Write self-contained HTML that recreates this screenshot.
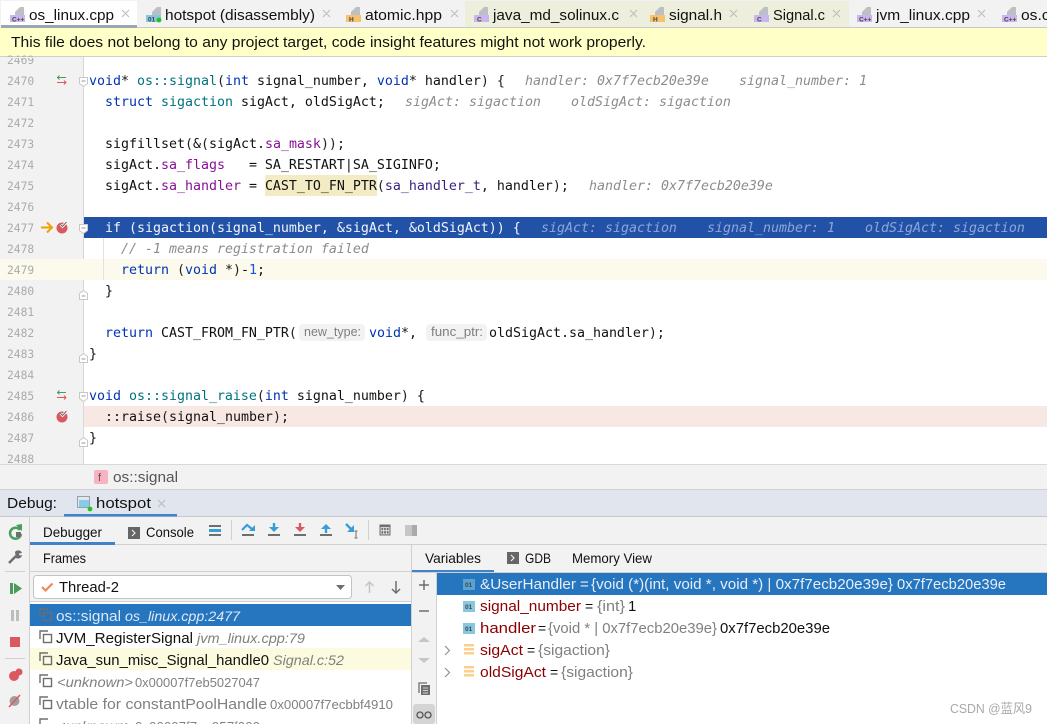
<!DOCTYPE html>
<html><head><meta charset="utf-8"><style>
html,body{margin:0;padding:0;background:#fff;width:1047px;height:724px;overflow:hidden}
svg{display:block}
text{white-space:pre}
.u{font-family:"Liberation Sans","Noto Sans CJK SC",sans-serif;font-size:15px;fill:#111}
.s{font-size:14px}
.c{font-family:"DejaVu Sans Mono",monospace;font-size:13.29px;fill:#111}
.h{font-family:"DejaVu Sans Mono",monospace;font-size:13.29px;font-style:italic;fill:#8c8c8c}
.n{font-family:"DejaVu Sans Mono",monospace;font-size:11.3px;fill:#ababab}
.k{fill:#0033b3}.t{fill:#00727f}.p{fill:#871094}.m{fill:#1750eb}.y{fill:#222}.l{fill:#371f80}
.v{fill:#8b0000}.g{fill:#808080}.w{fill:#e8eef8}
.tiny{font-family:"Liberation Sans",sans-serif;font-size:6.5px;font-weight:bold;fill:#444}
</style></head><body>
<svg width="1047" height="724" viewBox="0 0 1047 724" xmlns="http://www.w3.org/2000/svg">
<!-- tabs -->
<rect x="0" y="0" width="1047" height="28" fill="#f2f2f2"/>
<rect x="465" y="1" width="384" height="26" fill="#eeeedd"/>
<rect x="1" y="1" width="136" height="24" fill="#fff"/>
<rect x="1" y="25" width="136" height="3" fill="#9aa6b4"/>
<rect x="137" y="27" width="910" height="1" fill="#c9c9c9"/>
<g fill="#bcc0c4">
<path d="M15 15v-3l5-5h4v8z"/><path d="M152 15v-3l5-5h4v8z"/><path d="M351 15v-3l5-5h4v8z"/><path d="M479 15v-3l5-5h4v8z"/><path d="M655 15v-3l5-5h4v8z"/><path d="M759 15v-3l5-5h4v8z"/><path d="M862 15v-3l5-5h4v8z"/><path d="M1007 15v-3l5-5h4v8z"/>
</g>
<rect x="10" y="15" width="15" height="7" fill="#c8b6ec"/><text x="12" y="21.500" class="tiny">C++</text>
<rect x="146" y="15" width="15" height="7" fill="#87c8e0"/><text x="148" y="21.500" class="tiny">01</text><circle cx="159" cy="20" r="2.400" fill="#22c322"/>
<rect x="346" y="15" width="15" height="7" fill="#f5c26e"/><text x="349" y="21.500" class="tiny">H</text>
<rect x="474" y="15" width="15" height="7" fill="#c8b6ec"/><text x="477" y="21.500" class="tiny">C</text>
<rect x="650" y="15" width="15" height="7" fill="#f5c26e"/><text x="653" y="21.500" class="tiny">H</text>
<rect x="754" y="15" width="15" height="7" fill="#c8b6ec"/><text x="757" y="21.500" class="tiny">C</text>
<rect x="857" y="15" width="15" height="7" fill="#c8b6ec"/><text x="859" y="21.500" class="tiny">C++</text>
<rect x="1002" y="15" width="15" height="7" fill="#c8b6ec"/><text x="1004" y="21.500" class="tiny">C++</text>
<text x="29" y="20" class="u" textLength="85" lengthAdjust="spacingAndGlyphs">os_linux.cpp</text>
<text x="165" y="20" class="u" textLength="150" lengthAdjust="spacingAndGlyphs">hotspot (disassembly)</text>
<text x="365" y="20" class="u" textLength="77" lengthAdjust="spacingAndGlyphs">atomic.hpp</text>
<text x="493" y="20" class="u" textLength="126" lengthAdjust="spacingAndGlyphs">java_md_solinux.c</text>
<text x="669" y="20" class="u" textLength="53" lengthAdjust="spacingAndGlyphs">signal.h</text>
<text x="773" y="20" class="u" textLength="52" lengthAdjust="spacingAndGlyphs">Signal.c</text>
<text x="876" y="20" class="u" textLength="94" lengthAdjust="spacingAndGlyphs">jvm_linux.cpp</text>
<text x="1021" y="20" class="u" textLength="46" lengthAdjust="spacingAndGlyphs">os.cpp</text>
<g stroke="#bdbdbd" stroke-width="1.100" fill="none">
<path d="M122 10l7 7M129 10l-7 7M323 10l7 7M330 10l-7 7M451 10l7 7M458 10l-7 7M630 10l7 7M637 10l-7 7M730 10l7 7M737 10l-7 7M833 10l7 7M840 10l-7 7M978 10l7 7M985 10l-7 7"/>
</g>
<!-- banner -->
<rect x="0" y="28" width="1047" height="28" fill="#ffffc8"/>
<rect x="0" y="56" width="1047" height="1" fill="#cfcfcf"/>
<text x="11" y="47" class="u" textLength="635" lengthAdjust="spacingAndGlyphs">This file does not belong to any project target, code insight features might not work properly.</text>
<!-- editor -->
<rect x="0" y="57" width="84" height="407" fill="#f2f2f2"/>
<rect x="83" y="57" width="1" height="407" fill="#d8d8d8"/>
<rect x="0" y="259" width="1047" height="21" fill="#fcfaed"/>
<rect x="84" y="217" width="963" height="21" fill="#2251a8"/>
<rect x="84" y="406" width="963" height="21" fill="#f8e8e3"/>
<rect x="265" y="175" width="112" height="21" fill="#f3ebc4"/>
<rect x="103" y="238" width="1" height="42" fill="#e2e2e2"/>
<g class="n">
<text x="7" y="64" class="n">2469</text><text x="7" y="85" class="n">2470</text><text x="7" y="106" class="n">2471</text><text x="7" y="127" class="n">2472</text><text x="7" y="148" class="n">2473</text><text x="7" y="169" class="n">2474</text><text x="7" y="190" class="n">2475</text><text x="7" y="211" class="n">2476</text><text x="7" y="232" class="n">2477</text><text x="7" y="253" class="n">2478</text><text x="7" y="274" class="n">2479</text><text x="7" y="295" class="n">2480</text><text x="7" y="316" class="n">2481</text><text x="7" y="337" class="n">2482</text><text x="7" y="358" class="n">2483</text><text x="7" y="379" class="n">2484</text><text x="7" y="400" class="n">2485</text><text x="7" y="421" class="n">2486</text><text x="7" y="442" class="n">2487</text><text x="7" y="463" class="n">2488</text>
</g>
<rect x="0" y="57" width="83" height="1" fill="#f2f2f2"/>
<text x="89" y="85" class="c"><tspan class="k">void</tspan>* <tspan class="t">os::signal</tspan><tspan class="y">(</tspan><tspan class="k">int</tspan> signal_number, <tspan class="k">void</tspan>* handler<tspan class="y">)</tspan> <tspan class="y">{</tspan></text>
<text x="525" y="85" class="h">handler: 0x7f7ecb20e39e</text><text x="739" y="85" class="h">signal_number: 1</text>
<text x="105" y="106" class="c"><tspan class="k">struct</tspan> <tspan class="t">sigaction</tspan> sigAct, oldSigAct;</text>
<text x="405" y="106" class="h">sigAct: sigaction</text><text x="571" y="106" class="h">oldSigAct: sigaction</text>
<text x="105" y="148" class="c">sigfillset<tspan class="y">(</tspan>&amp;<tspan class="y">(</tspan>sigAct.<tspan class="p">sa_mask</tspan><tspan class="y">))</tspan>;</text>
<text x="105" y="169" class="c">sigAct.<tspan class="p">sa_flags</tspan>   = SA_RESTART|SA_SIGINFO;</text>
<text x="105" y="190" class="c">sigAct.<tspan class="p">sa_handler</tspan> = CAST_TO_FN_PTR<tspan class="y">(</tspan><tspan class="l">sa_handler_t</tspan>, handler<tspan class="y">)</tspan>;</text>
<text x="589" y="190" class="h">handler: 0x7f7ecb20e39e</text>
<text x="105" y="232" class="c" style="fill:#f2f5fb">if (sigaction(signal_number, &amp;sigAct, &amp;oldSigAct)) {</text>
<g style="opacity:.55"><text x="541" y="232" class="h" style="fill:#e6ecf8">sigAct: sigaction</text><text x="707" y="232" class="h" style="fill:#e6ecf8">signal_number: 1</text><text x="865" y="232" class="h" style="fill:#e6ecf8">oldSigAct: sigaction</text></g>
<text x="121" y="253" class="h">// -1 means registration failed</text>
<text x="121" y="274" class="c"><tspan class="k">return</tspan> <tspan class="y">(</tspan><tspan class="k">void</tspan> *<tspan class="y">)</tspan>-<tspan class="m">1</tspan>;</text>
<text x="105" y="295" class="c">}</text>
<text x="105" y="337" class="c"><tspan class="k">return</tspan> CAST_FROM_FN_PTR<tspan class="y">(</tspan></text>
<rect x="299" y="324" width="66" height="17" rx="4" fill="#f2f2f2"/><text x="304" y="336" class="u" style="font-size:12.500px;fill:#7f7f7f" textLength="57" lengthAdjust="spacingAndGlyphs">new_type:</text>
<text x="369" y="337" class="c"><tspan class="k">void</tspan>*,</text>
<rect x="426" y="324" width="61" height="17" rx="4" fill="#f2f2f2"/><text x="431" y="336" class="u" style="font-size:12.500px;fill:#7f7f7f" textLength="52" lengthAdjust="spacingAndGlyphs">func_ptr:</text>
<text x="489" y="337" class="c">oldSigAct.sa_handler<tspan class="y">)</tspan>;</text>
<text x="89" y="358" class="c">}</text>
<text x="89" y="400" class="c"><tspan class="k">void</tspan> <tspan class="t">os::signal_raise</tspan><tspan class="y">(</tspan><tspan class="k">int</tspan> signal_number<tspan class="y">)</tspan> {</text>
<text x="105" y="421" class="c">::raise<tspan class="y">(</tspan>signal_number<tspan class="y">)</tspan>;</text>
<text x="89" y="442" class="c">}</text>
<!-- gutter icons -->
<g fill="none" stroke-width="1">
<path d="M57 77.500h9M59.500 75.500l-2 2 2 2" stroke="#4a9c5d"/><path d="M57 82.500h9M64 80.500l2 2-2 2" stroke="#db5860"/>
<path d="M57 392.500h9M59.500 390.500l-2 2 2 2" stroke="#4a9c5d"/><path d="M57 397.500h9M64 395.500l2 2-2 2" stroke="#db5860"/>
</g>
<path d="M41 227.500h10M47 222.500l5 5-5 5" fill="none" stroke="#eda200" stroke-width="2"/>
<circle cx="62" cy="228" r="5.500" fill="#db5860"/><path d="M60.500 224.500l2 2 4-4.500" stroke="#fff" stroke-width="2.600" fill="none"/><path d="M60.500 224.500l2 2 4-4.500" stroke="#6e6e6e" stroke-width="1.100" fill="none"/>
<circle cx="62" cy="417" r="5.500" fill="#db5860"/><path d="M60.500 413.500l2 2 4-4.500" stroke="#fff" stroke-width="2.600" fill="none"/><path d="M60.500 413.500l2 2 4-4.500" stroke="#6e6e6e" stroke-width="1.100" fill="none"/>
<g fill="#fff" stroke="#c8c8c8" stroke-width="1">
<path d="M79.500 77.500h8v6l-4 3-4-3z"/><path d="M79.500 224.500h8v6l-4 3-4-3z"/><path d="M79.500 392.500h8v6l-4 3-4-3z"/>
<path d="M79.500 293.500l4-3 4 3v6h-8z"/><path d="M79.500 356.500l4-3 4 3v6h-8z"/><path d="M79.500 440.500l4-3 4 3v6h-8z"/>
</g>
<path d="M81.500 81h4M81.500 228h4M81.500 396h4M81.500 296h4M81.500 359h4M81.500 443h4" stroke="#999" stroke-width="1"/>
<!-- breadcrumb -->
<rect x="0" y="464" width="1047" height="25" fill="#f2f2f2"/>
<rect x="0" y="464" width="1047" height="1" fill="#d8d8d8"/>
<rect x="94" y="470" width="14" height="14" rx="2" fill="#f7b3c2"/>
<text x="98" y="481" class="u" style="font-size:11px;fill:#66505a">f</text>
<text x="113" y="482" class="u" style="fill:#555" textLength="65" lengthAdjust="spacingAndGlyphs">os::signal</text>
<!-- debug header -->
<rect x="0" y="489" width="1047" height="28" fill="#e1e5ee"/>
<rect x="0" y="489" width="1047" height="1" fill="#d0d0d0"/>
<rect x="0" y="516" width="1047" height="1" fill="#c9c9c9"/>
<rect x="64" y="514" width="113" height="2.500" fill="#4083c9"/>
<text x="7" y="508" class="u" textLength="50" lengthAdjust="spacingAndGlyphs">Debug:</text>
<rect x="77.500" y="496.500" width="12" height="11" fill="none" stroke="#9aa0a6"/><rect x="79" y="500" width="10" height="7" fill="#86cbe8"/><circle cx="90" cy="509" r="2.400" fill="#22c322"/>
<text x="96" y="508" class="u" textLength="55" lengthAdjust="spacingAndGlyphs">hotspot</text>
<path d="M158 500l7 7M165 500l-7 7" stroke="#bdbdbd" stroke-width="1.100"/>
<!-- debug body -->
<rect x="0" y="517" width="1047" height="207" fill="#f2f2f2"/>
<rect x="29" y="517" width="1" height="207" fill="#d0d0d0"/>
<rect x="30" y="544" width="1017" height="1" fill="#d0d0d0"/>
<rect x="30" y="542" width="85" height="3" fill="#4083c9"/>
<text x="43" y="537" class="u s" textLength="59" lengthAdjust="spacingAndGlyphs">Debugger</text>
<rect x="128" y="527" width="12" height="12" fill="#666"/><path d="M132 530l3 3-3 3" stroke="#eee" fill="none" stroke-width="1.200"/>
<text x="146" y="537" class="u s" textLength="48" lengthAdjust="spacingAndGlyphs">Console</text>
<rect x="209" y="525" width="12" height="2" fill="#6e6e6e"/><rect x="209" y="529" width="12" height="3" fill="#389fd6"/><rect x="209" y="534" width="12" height="2" fill="#6e6e6e"/>
<rect x="231" y="520" width="1" height="20" fill="#d0d0d0"/><rect x="368" y="520" width="1" height="20" fill="#d0d0d0"/>
<!-- step icons -->
<g fill="#6e6e6e"><rect x="242" y="534" width="12" height="2"/><rect x="268" y="534" width="12" height="2"/><rect x="294" y="534" width="12" height="2"/><rect x="320" y="534" width="12" height="2"/></g>
<path d="M242 530l5-5 5 4" fill="none" stroke="#389fd6" stroke-width="2.200"/><path d="M249 531h6v-6z" fill="#389fd6"/>
<path d="M274 523v6" stroke="#389fd6" stroke-width="2.400"/><path d="M269 527h10l-5 5z" fill="#389fd6"/>
<path d="M300 523v6" stroke="#db5860" stroke-width="2.400"/><path d="M295 527h10l-5 5z" fill="#db5860"/>
<path d="M326 527v6" stroke="#389fd6" stroke-width="2.400"/><path d="M321 529h10l-5-5z" fill="#389fd6"/>
<path d="M346 524l6 6" stroke="#389fd6" stroke-width="2.400"/><path d="M347 532h7v-7z" fill="#389fd6"/>
<path d="M354.500 531h3M356 531v7M354.500 538h3" stroke="#6e6e6e" stroke-width="1" fill="none"/>
<rect x="379.500" y="524.500" width="11" height="11" fill="#6e6e6e"/><path d="M381 527.500h8v6.500h-8z" fill="none" stroke="#f2f2f2" stroke-width=".8"/><path d="M383.700 527.500v6.500M386.300 527.500v6.500M381 530.700h8" stroke="#f2f2f2" stroke-width=".8"/>
<rect x="405" y="525" width="7" height="11" fill="#c6c6c6"/><rect x="412" y="525" width="5" height="11" fill="#aaa"/>
<!-- left strip icons -->
<path d="M20 530a5.500 5.500 0 1 0 1 4" fill="none" stroke="#4a9c5d" stroke-width="2.500"/><path d="M16 525l6-1v7z" fill="#4a9c5d"/><rect x="16" y="532" width="5" height="5" fill="#6e6e6e"/>
<path d="M9 563l7-7" stroke="#6e6e6e" stroke-width="2.500"/><path d="M15 552a4 4 0 0 1 7 1l-3 .5.500 2 2.500-.5a4 4 0 0 1-6 3z" fill="#6e6e6e"/>
<rect x="5" y="571" width="20" height="1" fill="#d0d0d0"/>
<rect x="10" y="583" width="3" height="11" fill="#4a9c5d"/><path d="M14 583l8 5.500-8 5.500z" fill="#4a9c5d"/>
<rect x="11" y="610" width="3" height="11" fill="#bdbdbd"/><rect x="16" y="610" width="3" height="11" fill="#bdbdbd"/>
<rect x="10" y="637" width="10" height="10" fill="#db5860"/>
<rect x="5" y="658" width="20" height="1" fill="#d0d0d0"/>
<circle cx="14" cy="676" r="5" fill="#db5860"/><circle cx="19" cy="672" r="3.500" fill="#db5860"/>
<circle cx="14.500" cy="701" r="5" fill="#a0a0a0"/><path d="M9 707l11-12" stroke="#db5860" stroke-width="1.500"/>
<!-- frames -->
<text x="43" y="563" class="u s" textLength="43" lengthAdjust="spacingAndGlyphs">Frames</text>
<rect x="30" y="571" width="381" height="1" fill="#d0d0d0"/>
<rect x="33.500" y="575.500" width="318" height="23" rx="3" fill="#fff" stroke="#c4c4c4"/>
<path d="M42 587l3.500 3.500 7-7" fill="none" stroke="#f0875a" stroke-width="2.200"/>
<text x="59" y="592" class="u" textLength="60" lengthAdjust="spacingAndGlyphs">Thread-2</text>
<path d="M336 585h9l-4.500 5z" fill="#6e6e6e"/>
<path d="M369.500 593v-11M365.500 586l4-4 4 4" fill="none" stroke="#c4c4c4" stroke-width="1.500"/>
<path d="M396 581v12M392 589l4 4 4-4" fill="none" stroke="#6e6e6e" stroke-width="1.500"/>
<rect x="411" y="545" width="1" height="179" fill="#d0d0d0"/>
<rect x="30" y="602" width="381" height="122" fill="#fff"/>
<rect x="30" y="601" width="381" height="1" fill="#d0d0d0"/>
<rect x="30" y="604" width="381" height="22" fill="#2675bf"/>
<rect x="30" y="648" width="381" height="22" fill="#fdfbdf"/>
<g fill="none" stroke="#6e6e6e" stroke-width="1.400">
<path d="M40 617v-8h8"/><rect x="43.500" y="612.500" width="8" height="8"/>
<path d="M40 639v-8h8"/><rect x="43.500" y="634.500" width="8" height="8"/>
<path d="M40 661v-8h8"/><rect x="43.500" y="656.500" width="8" height="8"/>
<path d="M40 683v-8h8"/><rect x="43.500" y="678.500" width="8" height="8"/>
<path d="M40 705v-8h8"/><rect x="43.500" y="700.500" width="8" height="8"/>
<path d="M40 724v-5h8"/>
</g>
<text x="56" y="621" class="u" style="fill:#dfe9f5" textLength="65" lengthAdjust="spacingAndGlyphs">os::signal</text>
<text x="125" y="621" class="u s" font-style="italic" style="fill:#dfe9f5" textLength="115" lengthAdjust="spacingAndGlyphs">os_linux.cpp:2477</text>
<text x="56" y="643" class="u" textLength="137" lengthAdjust="spacingAndGlyphs">JVM_RegisterSignal</text>
<text x="197" y="643" class="u s g" font-style="italic" textLength="108" lengthAdjust="spacingAndGlyphs">jvm_linux.cpp:79</text>
<text x="56" y="665" class="u" textLength="213" lengthAdjust="spacingAndGlyphs">Java_sun_misc_Signal_handle0</text>
<text x="273" y="665" class="u s g" font-style="italic" textLength="71" lengthAdjust="spacingAndGlyphs">Signal.c:52</text>
<text x="57" y="687" class="u s g" font-style="italic" textLength="76" lengthAdjust="spacingAndGlyphs">&lt;unknown&gt;</text>
<text x="135" y="687" class="u s g" style="font-size:13px" textLength="125" lengthAdjust="spacingAndGlyphs">0x00007f7eb5027047</text>
<text x="56" y="709" class="u g" textLength="211" lengthAdjust="spacingAndGlyphs">vtable for constantPoolHandle</text>
<text x="270" y="709" class="u s g" style="font-size:13px" textLength="123" lengthAdjust="spacingAndGlyphs">0x00007f7ecbbf4910</text>
<text x="57" y="731" class="u s g" font-style="italic" textLength="76" lengthAdjust="spacingAndGlyphs">&lt;unknown&gt;</text>
<text x="135" y="731" class="u s g" style="font-size:13px" textLength="125" lengthAdjust="spacingAndGlyphs">0x00007f7ea957f000</text>
<!-- variables -->
<text x="425" y="563" class="u s" textLength="56" lengthAdjust="spacingAndGlyphs">Variables</text>
<rect x="412" y="570" width="82" height="2.500" fill="#4083c9"/>
<rect x="507" y="552" width="12" height="12" fill="#666"/><path d="M511 555l3 3-3 3" stroke="#eee" fill="none" stroke-width="1.200"/>
<text x="525" y="563" class="u s" textLength="26" lengthAdjust="spacingAndGlyphs">GDB</text>
<text x="572" y="563" class="u s" textLength="80" lengthAdjust="spacingAndGlyphs">Memory View</text>
<rect x="412" y="572" width="635" height="1" fill="#d0d0d0"/>
<rect x="436" y="573" width="611" height="151" fill="#fff"/>
<rect x="436" y="573" width="1" height="151" fill="#d0d0d0"/>
<rect x="437" y="573" width="610" height="22" fill="#2675bf"/>
<path d="M419 585h10M424 580v10" stroke="#6e6e6e" stroke-width="1.500"/>
<path d="M419 611h10" stroke="#6e6e6e" stroke-width="1.500"/>
<path d="M418 642l6-5 6 5z" fill="#c6c6c6"/><path d="M418 658l6 5 6-5z" fill="#c6c6c6"/>
<g fill="none" stroke="#6e6e6e" stroke-width="1.300"><path d="M419 693v-10h8"/></g><rect x="421" y="685" width="9" height="10" fill="#6e6e6e"/><path d="M423 688h5M423 690.500h5M423 693h5" stroke="#f2f2f2" stroke-width=".8"/>
<rect x="413" y="704" width="22" height="20" rx="3" fill="#d4d4d4"/>
<circle cx="420" cy="715" r="3" fill="none" stroke="#555" stroke-width="1.300"/><circle cx="428" cy="715" r="3" fill="none" stroke="#555" stroke-width="1.300"/>
<g fill="#87c8e0"><rect x="463" y="579" width="12" height="11" fill="#5ba3cf"/><rect x="463" y="601" width="12" height="11"/><rect x="463" y="623" width="12" height="11"/></g>
<g class="tiny" style="font-size:7px"><text x="465" y="587" class="tiny">01</text><text x="465" y="609" class="tiny">01</text><text x="465" y="631" class="tiny">01</text></g>
<g fill="#fbd08a"><rect x="464" y="644" width="10" height="2.500"/><rect x="464" y="648" width="10" height="2.500"/><rect x="464" y="652" width="10" height="2.500"/><rect x="464" y="666" width="10" height="2.500"/><rect x="464" y="670" width="10" height="2.500"/><rect x="464" y="674" width="10" height="2.500"/></g>
<path d="M445 646l4.500 4.500-4.500 4.500M445 668l4.500 4.500-4.500 4.500" fill="none" stroke="#8c8c8c" stroke-width="1.100"/>
<text x="480" y="589" class="u w" textLength="96" lengthAdjust="spacingAndGlyphs">&amp;UserHandler</text>
<text x="580" y="589" class="u w">=</text>
<text x="591" y="589" class="u w" textLength="302" lengthAdjust="spacingAndGlyphs">{void (*)(int, void *, void *) | 0x7f7ecb20e39e}</text>
<text x="897" y="589" class="u w" textLength="109" lengthAdjust="spacingAndGlyphs">0x7f7ecb20e39e</text>
<text x="480" y="611" class="u v" textLength="101" lengthAdjust="spacingAndGlyphs">signal_number</text>
<text x="585" y="611" class="u" style="font-size:14px">=</text>
<text x="597" y="611" class="u g" textLength="28" lengthAdjust="spacingAndGlyphs">{int}</text>
<text x="628" y="611" class="u">1</text>
<text x="480" y="633" class="u v" textLength="56" lengthAdjust="spacingAndGlyphs">handler</text>
<text x="538" y="633" class="u" style="font-size:14px">=</text>
<text x="548" y="633" class="u g" textLength="169" lengthAdjust="spacingAndGlyphs">{void * | 0x7f7ecb20e39e}</text>
<text x="720" y="633" class="u" textLength="110" lengthAdjust="spacingAndGlyphs">0x7f7ecb20e39e</text>
<text x="480" y="655" class="u v" textLength="43" lengthAdjust="spacingAndGlyphs">sigAct</text>
<text x="527" y="655" class="u" style="font-size:14px">=</text>
<text x="538" y="655" class="u g" textLength="72" lengthAdjust="spacingAndGlyphs">{sigaction}</text>
<text x="480" y="677" class="u v" textLength="66" lengthAdjust="spacingAndGlyphs">oldSigAct</text>
<text x="550" y="677" class="u" style="font-size:14px">=</text>
<text x="561" y="677" class="u g" textLength="72" lengthAdjust="spacingAndGlyphs">{sigaction}</text>
<!-- watermark -->
<text x="950" y="713" class="u" style="font-size:13px;fill:#a9a9a9" textLength="82" lengthAdjust="spacingAndGlyphs">CSDN @蓝风9</text>
</svg>
</body></html>
